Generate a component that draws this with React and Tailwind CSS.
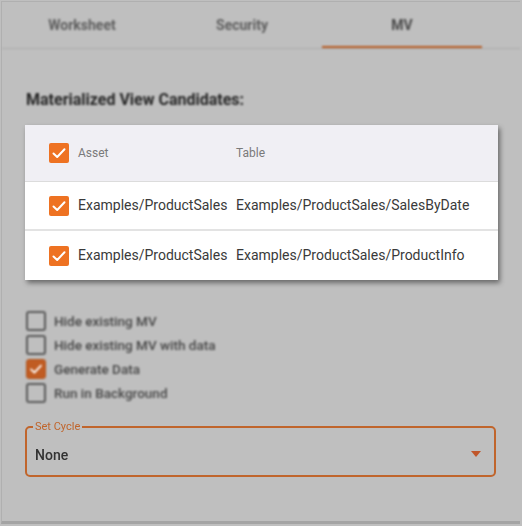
import { useState } from "react";

const rows = [
  { asset: "Examples/ProductSales", table: "Examples/ProductSales/SalesByDate" },
  { asset: "Examples/ProductSales", table: "Examples/ProductSales/ProductInfo" },
];

const options = [
  { label: "Hide existing MV", checked: false },
  { label: "Hide existing MV with data", checked: false },
  { label: "Generate Data", checked: true },
  { label: "Run in Background", checked: false },
];

function Check() {
  return (
    <svg viewBox="0 0 20 20" className="w-5 h-5">
      <path d="M4.5 10.5 L8.2 14 L15.5 6.2" fill="none" stroke="white" strokeWidth="2" strokeLinecap="round" strokeLinejoin="round" />
    </svg>
  );
}

function OrangeBox() {
  return (
    <div className="w-5 h-5 rounded-[2px] bg-[#ee7222] flex items-center justify-center shrink-0">
      <Check />
    </div>
  );
}

export default function App() {
  const [tab] = useState("MV");

  return (
    <div className="w-[522px] h-[526px] bg-[#bfbfbf] overflow-hidden" style={{ fontFamily: "Roboto, 'Liberation Sans', sans-serif" }}>
      <div className="h-[523px] border-t border-l border-[#b0b0b0] border-b-[3px] border-b-[#a4a4a4] mt-px ml-px w-[519px] flex flex-col">
        {/* Tabs */}
        <div className="blur-[0.8px] flex h-[47px] border-b border-[#ababab] shrink-0">
          {["Worksheet", "Security", "MV"].map((t) => (
            <div key={t} className="w-[160px] flex flex-col">
              <div className={`flex-1 flex items-center justify-center pt-[3px] text-[14px] font-bold ${t === tab ? "text-[#4a4a4a]" : "text-[#5e5e5e]"}`}>
                {t}
              </div>
              <div className={`h-[2px] ${t === tab ? "bg-[#b85a20]" : ""}`} />
            </div>
          ))}
        </div>

        {/* Heading */}
        <div className="blur-[0.8px] pl-6 pt-[40px] text-[16px] font-bold text-[#262626] leading-[22px]">
          Materialized View Candidates:
        </div>

        {/* Table */}
        <div className="ml-[23px] mt-[14px] w-[473px] bg-white shadow-[2px_3px_5px_rgba(0,0,0,0.45)]">
          <div className="h-[57px] bg-[#f0eff4] border-b border-[#dcdcdc] flex items-center">
            <div className="pl-[24px] w-[53px]"><OrangeBox /></div>
            <div className="w-[158px] text-[12px] text-[#7a7a7a]">Asset</div>
            <div className="text-[12px] text-[#7a7a7a]">Table</div>
          </div>
          {rows.map((r, i) => (
            <div key={i} className={`h-[49px] flex items-center ${i === 0 ? "border-b-2 border-[#e3e3e3]" : ""}`}>
              <div className="pl-[24px] w-[53px]"><OrangeBox /></div>
              <div className="w-[158px] text-[14px] text-[#3a3a3a] whitespace-nowrap">{r.asset}</div>
              <div className="text-[14px] text-[#3a3a3a] whitespace-nowrap">{r.table}</div>
            </div>
          ))}
        </div>

        {/* Options */}
        <div className="blur-[0.8px] pl-6 pt-[31px] flex flex-col gap-1">
          {options.map((o) => (
            <div key={o.label} className="flex items-center gap-2 h-5">
              {o.checked ? (
                <div className="w-5 h-5 rounded-[3px] bg-[#c05c22] border border-[#b0541d] flex items-center justify-center">
                  <Check />
                </div>
              ) : (
                <div className="w-5 h-5 rounded-[3px] border-2 border-[#5a5a5a]" />
              )}
              <span className="text-[13.5px] font-medium text-[#474747]">{o.label}</span>
            </div>
          ))}
        </div>

        {/* Set Cycle */}
        <fieldset className="blur-[0.7px] ml-[23px] mr-[24px] mt-[19px] h-[55px] border-2 border-[#c0652c] rounded-[5px] px-[8px]">
          <legend className="-ml-[2px] px-[2px] text-[11px] leading-[10px] text-[#c0652c]">Set Cycle</legend>
          <div className="flex items-center justify-between h-[36px] pt-[10px] pr-[5px]">
            <span className="text-[14px] font-medium text-[#333]">None</span>
            <svg viewBox="0 0 10 6" className="w-[10px] h-[6px] mb-[3px]">
              <path d="M0 0 L10 0 L5 6 Z" fill="#c0562a" />
            </svg>
          </div>
        </fieldset>
      </div>
    </div>
  );
}
